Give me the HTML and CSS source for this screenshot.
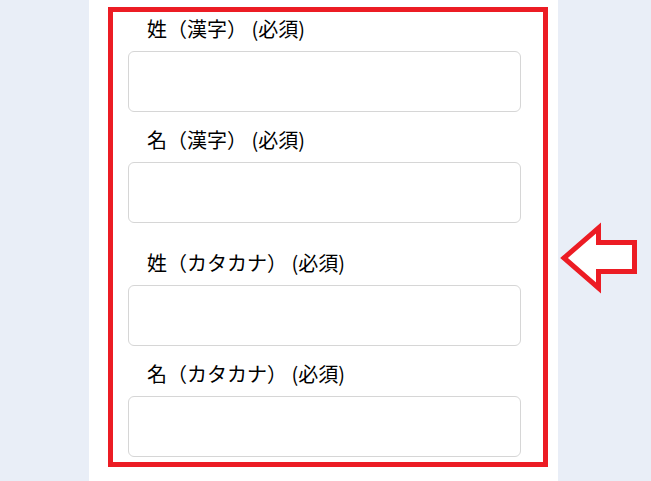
FILE: index.html
```html
<!DOCTYPE html>
<html lang="ja">
<head>
<meta charset="utf-8">
<title>フォーム</title>
<link rel="stylesheet" href="styles.css">
</head>
<body>
<div class="panel">
  <div class="frame">
    <div class="group">
      <div class="field">
        <label class="label">姓（漢字） (必須)</label>
        <input class="input" type="text">
      </div>
      <div class="field">
        <label class="label">名（漢字） (必須)</label>
        <input class="input" type="text">
      </div>
    </div>
    <div class="group">
      <div class="field">
        <label class="label">姓（カタカナ） (必須)</label>
        <input class="input" type="text">
      </div>
      <div class="field">
        <label class="label">名（カタカナ） (必須)</label>
        <input class="input" type="text">
      </div>
    </div>
  </div>
</div>
<svg class="arrow" width="90" height="76" viewBox="555 220 90 76" xmlns="http://www.w3.org/2000/svg">
  <polygon points="564,258 598.5,228 598.5,242.5 634.5,242.5 634.5,271.5 598.5,271.5 598.5,288" fill="#ffffff" stroke="#ec1c24" stroke-width="5" stroke-linejoin="miter" stroke-miterlimit="10"/>
</svg>
</body>
</html>
```

FILE: styles.css
```css
html, body {
  margin: 0;
  padding: 0;
}
body {
  background: #e9eef7;
  width: 651px;
  height: 481px;
  overflow: hidden;
  position: relative;
  font-family: "Noto Sans CJK JP", "Noto Sans", sans-serif;
  color: #000000;
}
.panel {
  margin-left: 89px;
  width: 469px;
  height: 481px;
  background: #ffffff;
  padding-top: 7px;
  box-sizing: border-box;
}
.frame {
  margin-left: 19px;
  width: 440px;
  height: 460px;
  box-sizing: border-box;
  border: 5px solid #ec1c24;
  padding: 3px 0 0 15px;
  display: flex;
  flex-direction: column;
  gap: 26px;
}
.group {
  display: flex;
  flex-direction: column;
  gap: 14px;
}
.field {
  display: flex;
  flex-direction: column;
  gap: 8px;
}
.label {
  display: block;
  font-size: 20px;
  line-height: 28px;
  height: 28px;
  padding-left: 19px;
  white-space: nowrap;
}
.input {
  display: block;
  width: 393px;
  height: 61px;
  box-sizing: border-box;
  border: 1px solid #d6d6d6;
  border-radius: 6px;
  background: #ffffff;
  margin: 0;
  padding: 0 12px;
  font-size: 16px;
  outline: none;
}
.arrow {
  position: absolute;
  left: 555px;
  top: 220px;
}
```
